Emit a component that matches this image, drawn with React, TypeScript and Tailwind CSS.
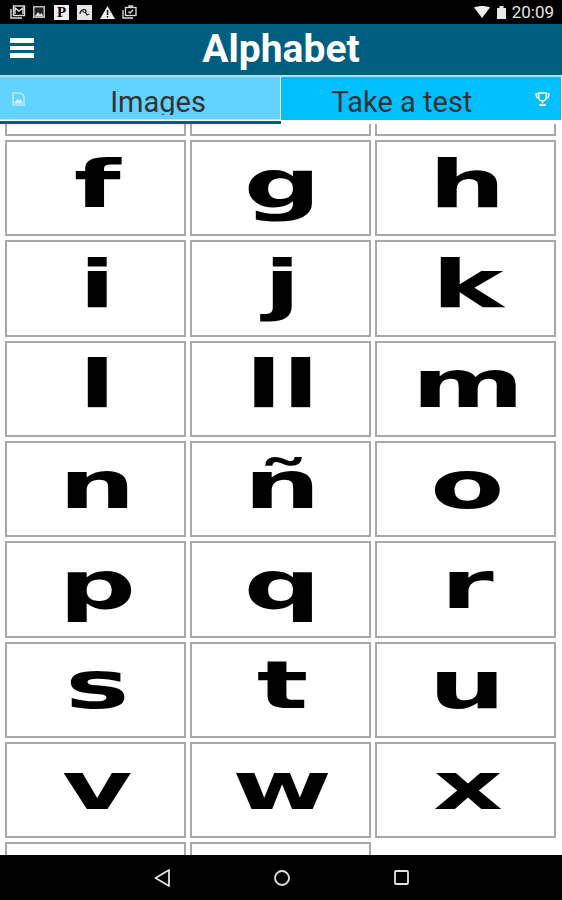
const ROWS = [
  ['c', 'd', 'e'],
  ['f', 'g', 'h'],
  ['i', 'j', 'k'],
  ['l', 'll', 'm'],
  ['n', 'ñ', 'o'],
  ['p', 'q', 'r'],
  ['s', 't', 'u'],
  ['v', 'w', 'x'],
  ['y', 'z'],
];

function StatusIcons() {
  return (
    <div className="flex items-center gap-[6px]">
      {/* gmail */}
      <svg width="16" height="14" viewBox="0 0 16 14" fill="none" stroke="#ddd" strokeWidth="1.4">
        <path d="M1 4v9h11" />
        <rect x="3.5" y="1" width="11" height="9.5" />
        <path d="M5 9V3l4 3 4-3v6" />
      </svg>
      {/* picture */}
      <svg className="ml-[1px]" width="12" height="12" viewBox="0 0 12 12">
        <rect width="12" height="12" fill="#bbb" />
        <rect x="1.5" y="1.5" width="9" height="9" fill="#222" />
        <path d="M1.5 10.5 5 6l2 2.5L8.500 7l2 3.500z" fill="#ddd" />
      </svg>
      <div className="ml-[3px] flex h-[15px] w-[15px] items-center justify-center bg-[#eeeeee] font-['Liberation_Serif',serif] text-[15px] font-bold leading-none text-black">
        P
      </div>
      <svg className="ml-[2px]" width="15" height="15" viewBox="0 0 15 15" fill="none">
        <rect width="15" height="15" fill="#e4e4e4" />
        <path d="M3 9c0-4 5-6 6-3 1 2-3 2-3 0M8 7l2 3 2-1" stroke="#222" strokeWidth="1.2" />
      </svg>
      <svg className="ml-[2px]" width="15" height="13" viewBox="0 0 15 13">
        <path d="M7.500 0 15 13H0z" fill="#eee" />
        <rect x="6.800" y="4" width="1.500" height="5" fill="#111" />
        <rect x="6.800" y="10" width="1.500" height="1.500" fill="#111" />
      </svg>
      <svg className="ml-[1px]" width="15" height="14" viewBox="0 0 15 14" fill="none" stroke="#ddd" strokeWidth="1.3">
        <path d="M1 5v8h10" />
        <rect x="3.500" y="2.500" width="10.500" height="8" />
        <path d="M7 2.500V1h3.500v1.500M6.500 6.500 8 8l3-3" />
      </svg>
    </div>
  );
}

function Cell({ letter }: { letter: string }) {
  return (
    <div className="flex h-[96.33px] items-center justify-center overflow-hidden border-2 border-[#a8a8a8] bg-white pb-[8px] pl-[4px]">
      <span className="origin-center scale-x-[1.66] font-['DejaVu_Sans',sans-serif] text-[65px] font-bold leading-none text-black">
        {letter}
      </span>
    </div>
  );
}

export default function App() {
  return (
    <div className="flex h-[900px] w-[562px] flex-col overflow-hidden bg-white font-['Roboto',sans-serif]">
      <div className="flex h-6 shrink-0 items-center justify-between bg-black pl-[10px] pr-[8px]">
        <StatusIcons />
        <div className="flex items-center">
          <svg width="16" height="12" viewBox="0 0 16 12">
            <path d="M0 1.500C4.500-.5 11.500-.5 16 1.500L8 12z" fill="#eeeeee" />
          </svg>
          <svg className="ml-[7px]" width="9" height="13" viewBox="0 0 9 13">
            <path d="M0 2h2.500V0h4v2H9v11H0z" fill="#e8e8e8" />
          </svg>
          <span className="ml-[6px] text-[17px] leading-none text-[#e6e6e6]">20:09</span>
        </div>
      </div>

      <header className="relative flex h-[51px] shrink-0 items-center justify-center bg-[#005f80]">
        <div className="absolute left-[10px] top-[14px] flex w-[24px] flex-col gap-[3px]">
          <div className="h-[4.5px] bg-white" />
          <div className="h-[4.5px] bg-white" />
          <div className="h-[4.5px] bg-white" />
        </div>
        <h1 className="text-[39px] font-bold leading-none text-white">Alphabet</h1>
      </header>

      <div className="flex h-[49px] shrink-0 items-start border-t-2 border-[#b4dff0] bg-white">
        <div className="flex h-[47px] w-[281px] flex-col">
          <div className="relative h-[43px] w-[280px] border-b border-[#b4e6ff] bg-[#62d2ff]">
            <svg className="absolute left-[12px] top-[15px]" width="13" height="14" viewBox="0 0 13 14" fill="none" stroke="#d8f3ff" strokeWidth="1.200">
              <path d="M1 1h8l3 3v9H1z" />
              <path d="M3 11l2.500-3 1.500 1.500L8.500 8l1.500 3z" fill="#d8f3ff" />
            </svg>
            <div className="flex h-[38px] justify-center overflow-hidden pl-[36px]">
              <span className="pt-[11px] text-[29px] leading-none text-[#333333]">Images</span>
            </div>
          </div>
          <div className="mt-px h-[3px] shrink-0 bg-[#005f80]" />
        </div>
        <div className="relative flex h-[43px] w-[280px] justify-center bg-[#00bfff] pr-[38px]">
          <span className="pt-[11px] text-[29px] leading-none text-[#333333]">Take a test</span>
          <svg className="absolute right-[11px] top-[15px]" width="15" height="14" viewBox="0 0 16 15" fill="none" stroke="#ffffff" strokeWidth="1.500">
            <path d="M4 1h8v4c0 6-8 6-8 0zM4 2H1c0 3 1 5 4 5M12 2h3c0 3-1 5-4 5" />
            <path d="M8 9v3M4.500 14h7" strokeWidth="2" />
          </svg>
        </div>
      </div>

      <main className="min-h-0 flex-1 overflow-hidden">
        <div className="-mt-[84.33px] grid grid-cols-[repeat(3,181px)] gap-x-1 gap-y-1 pl-[5px]">
          {ROWS.flat().map((l) => (
            <Cell key={l} letter={l} />
          ))}
        </div>
      </main>

      <nav className="flex h-[45px] shrink-0 items-center justify-center gap-[104px] bg-black">
        <svg width="16" height="18" viewBox="0 0 16 18" fill="none" stroke="#e4e4e4" strokeWidth="1.800" strokeLinejoin="round">
          <path d="M15 1v16L1.500 9z" />
        </svg>
        <svg width="16" height="16" viewBox="0 0 16 16" fill="none" stroke="#e4e4e4" strokeWidth="1.800">
          <circle cx="8" cy="8" r="7" />
        </svg>
        <svg width="15" height="15" viewBox="0 0 15 15" fill="none" stroke="#e4e4e4" strokeWidth="1.800">
          <rect x="1" y="1" width="13" height="13" rx="1" />
        </svg>
      </nav>
    </div>
  );
}
